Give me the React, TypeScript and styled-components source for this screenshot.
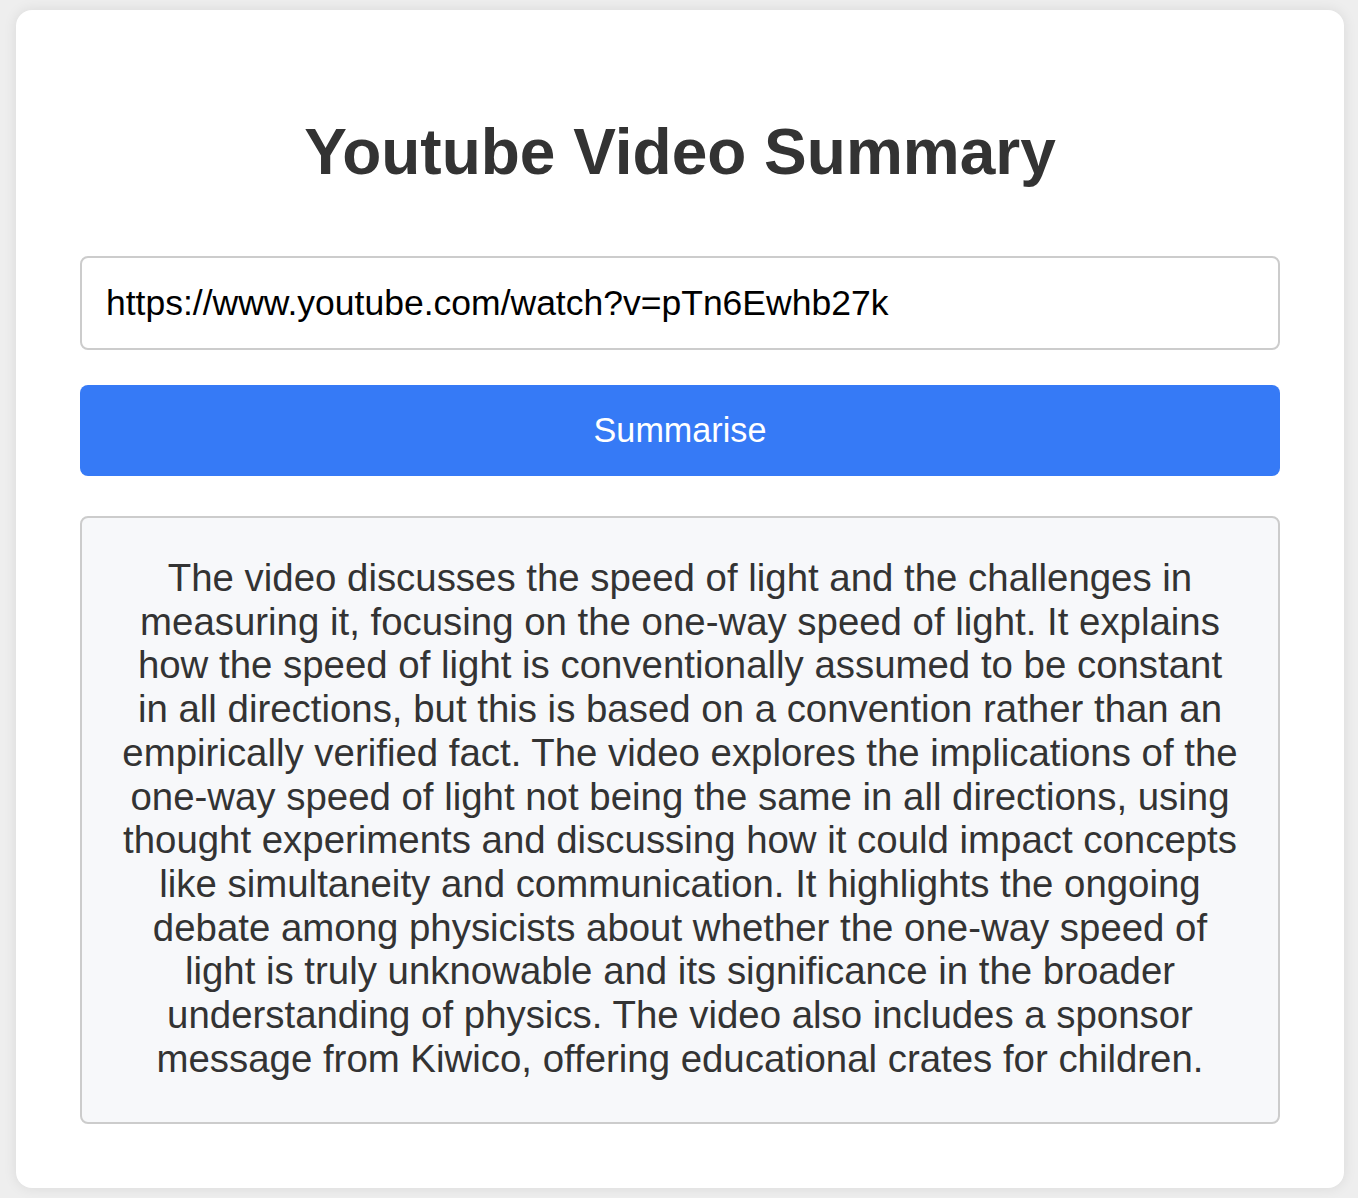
import React from "react";
import styled, { createGlobalStyle } from "styled-components";

const GlobalStyle = createGlobalStyle`
  html, body {
    margin: 0;
    padding: 0;
    background: #eeeeee;
  }
  body {
    font-family: "Liberation Sans", Arial, Helvetica, sans-serif;
    padding: 10px 14px 10px 16px;
  }
  * { box-sizing: border-box; }
`;

const Card = styled.div`
  background: #ffffff;
  border-radius: 16px;
  box-shadow: 0 0 14px rgba(0, 0, 0, 0.09);
  padding: 64px 64px 64px;
  display: flex;
  flex-direction: column;
`;

const Title = styled.h1`
  margin: 41px 0 67px;
  font-size: 64px;
  line-height: 74px;
  font-weight: 700;
  color: #333333;
  text-align: center;
`;

const UrlInput = styled.input`
  display: block;
  width: 100%;
  height: 94px;
  border: 2px solid #cccccc;
  border-radius: 8px;
  padding: 0 24px;
  font-family: "Liberation Sans", Arial, Helvetica, sans-serif;
  font-size: 35.5px;
  color: #000000;
  background: #ffffff;
  outline: none;
`;

const SubmitButton = styled.button`
  display: block;
  width: 100%;
  height: 91px;
  margin-top: 35px;
  border: none;
  border-radius: 8px;
  background: #367af6;
  color: #ffffff;
  font-family: "Liberation Sans", Arial, Helvetica, sans-serif;
  font-size: 34.2px;
  cursor: pointer;
`;

const SummaryBox = styled.div`
  margin-top: 40px;
  border: 2px solid #cccccc;
  border-radius: 8px;
  background: #f7f8fa;
  padding: 38px 40px 42px;
  color: #333333;
  font-size: 38.4px;
  line-height: 43.7px;
  text-align: center;
`;

const summary =
  "The video discusses the speed of light and the challenges in measuring it, focusing on the one-way speed of light. It explains how the speed of light is conventionally assumed to be constant in all directions, but this is based on a convention rather than an empirically verified fact. The video explores the implications of the one-way speed of light not being the same in all directions, using thought experiments and discussing how it could impact concepts like simultaneity and communication. It highlights the ongoing debate among physicists about whether the one-way speed of light is truly unknowable and its significance in the broader understanding of physics. The video also includes a sponsor message from Kiwico, offering educational crates for children.";

export default function App() {
  return (
    <>
      <GlobalStyle />
      <Card>
        <Title>Youtube Video Summary</Title>
        <UrlInput
          type="text"
          defaultValue="https://www.youtube.com/watch?v=pTn6Ewhb27k"
        />
        <SubmitButton type="button">Summarise</SubmitButton>
        <SummaryBox>{summary}</SummaryBox>
      </Card>
    </>
  );
}
